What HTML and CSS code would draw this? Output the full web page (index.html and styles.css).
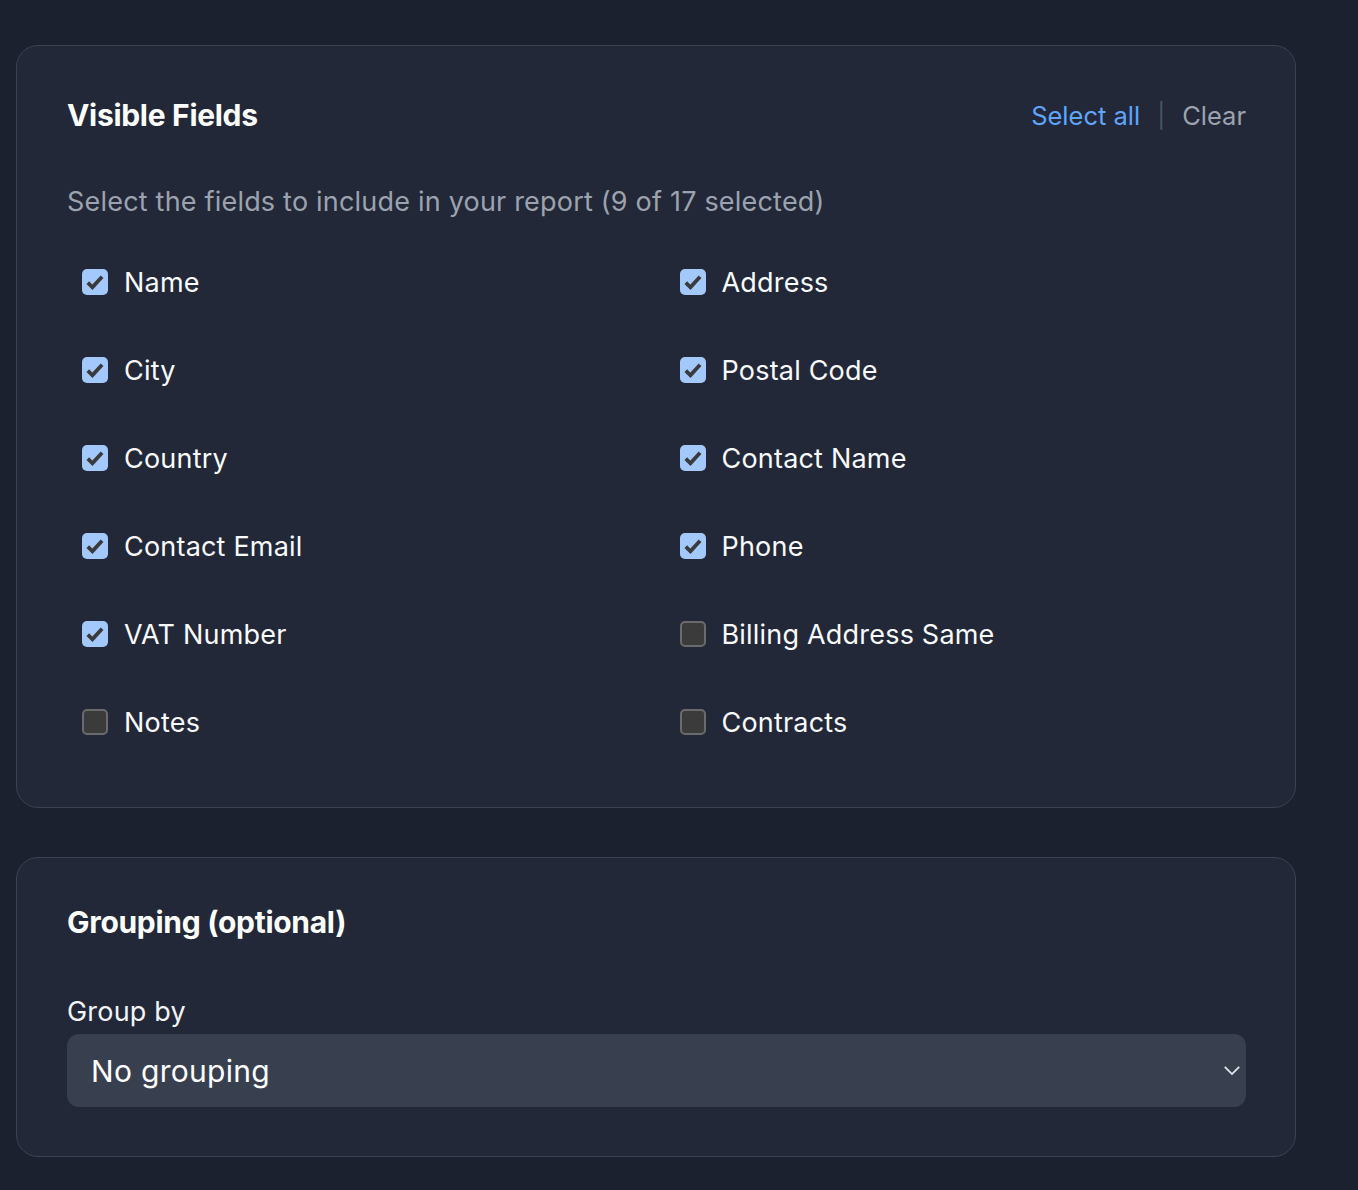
FILE: index.html
```html
<!DOCTYPE html>
<html lang="en">
<head>
    <meta charset="UTF-8">
    <title>Report Builder</title>
    <link rel="stylesheet" href="styles.css">
</head>
<body>
    <div class="page">
        <section class="card">
            <div class="card-header">
                <h2>Visible Fields</h2>
                <div class="header-links">
                    <a href="#" class="link-primary">Select all</a>
                    <span class="sep">|</span>
                    <a href="#" class="link-muted">Clear</a>
                </div>
            </div>
            <p class="hint">Select the fields to include in your report (9 of 17 selected)</p>
            <div class="fields">
                <label class="field"><span class="box checked"><svg viewBox="0 0 16 16"><path d="M3.2 8.4l3.1 3.1 6.4-7"/></svg></span>Name</label>
                <label class="field"><span class="box checked"><svg viewBox="0 0 16 16"><path d="M3.2 8.4l3.1 3.1 6.4-7"/></svg></span>Address</label>
                <label class="field"><span class="box checked"><svg viewBox="0 0 16 16"><path d="M3.2 8.4l3.1 3.1 6.4-7"/></svg></span>City</label>
                <label class="field"><span class="box checked"><svg viewBox="0 0 16 16"><path d="M3.2 8.4l3.1 3.1 6.4-7"/></svg></span>Postal Code</label>
                <label class="field"><span class="box checked"><svg viewBox="0 0 16 16"><path d="M3.2 8.4l3.1 3.1 6.4-7"/></svg></span>Country</label>
                <label class="field"><span class="box checked"><svg viewBox="0 0 16 16"><path d="M3.2 8.4l3.1 3.1 6.4-7"/></svg></span>Contact Name</label>
                <label class="field"><span class="box checked"><svg viewBox="0 0 16 16"><path d="M3.2 8.4l3.1 3.1 6.4-7"/></svg></span>Contact Email</label>
                <label class="field"><span class="box checked"><svg viewBox="0 0 16 16"><path d="M3.2 8.4l3.1 3.1 6.4-7"/></svg></span>Phone</label>
                <label class="field"><span class="box checked"><svg viewBox="0 0 16 16"><path d="M3.2 8.4l3.1 3.1 6.4-7"/></svg></span>VAT Number</label>
                <label class="field"><span class="box"></span>Billing Address Same</label>
                <label class="field"><span class="box"></span>Notes</label>
                <label class="field"><span class="box"></span>Contracts</label>
            </div>
        </section>

        <section class="card card-group">
            <h2>Grouping (optional)</h2>
            <div class="group-label">Group by</div>
            <div class="select">
                <span>No grouping</span>
                <svg viewBox="0 0 20 12"><path d="M2 2l8 8 8-8"/></svg>
            </div>
        </section>
    </div>
</body>
</html>
```

FILE: styles.css
```css
body {
    margin: 0;
    padding: 0;
    background-color: #1c2130;
    color: #f3f4f6;
    font-family: 'Inter', 'Noto Sans', sans-serif;
}
.page {
    padding: 45px 62px 30px 16px;
    display: flex;
    flex-direction: column;
    gap: 49px;
}
.card {
    background-color: #222837;
    border: 1px solid #3b4252;
    border-radius: 22px;
    padding: 46px 49px 63px 50px;
}
.card h2 {
    margin: 0;
    font-size: 30px;
    line-height: 36px;
    font-weight: 700;
    color: #ffffff;
    letter-spacing: -0.3px;
}
.card-header {
    display: flex;
    justify-content: space-between;
    align-items: center;
    height: 46px;
}
.header-links {
    display: flex;
    align-items: center;
    gap: 17px;
    font-size: 25.5px;
}
.header-links a {
    text-decoration: none;
}
.link-primary {
    color: #60a5fa;
}
.link-muted {
    color: #9ca3af;
}
.sep {
    color: #4b5563;
    font-size: 24px;
}
.hint {
    margin: 46px 0 40px;
    font-size: 27px;
    line-height: 36px;
    letter-spacing: 0.2px;
    color: #9ca3af;
}
.fields {
    display: grid;
    grid-template-columns: 1fr 1fr;
    column-gap: 16px;
    row-gap: 44px;
}
.field {
    display: flex;
    align-items: center;
    gap: 16px;
    height: 44px;
    padding-left: 15px;
    font-size: 27px;
    letter-spacing: 0.2px;
    color: #f9fafb;
}
.box {
    width: 22px;
    height: 22px;
    border: 2px solid #6b6b6b;
    border-radius: 5px;
    background-color: #3b3b3b;
    flex-shrink: 0;
}
.box.checked {
    width: 26px;
    height: 26px;
    border: none;
    background-color: #a2c8fc;
    display: flex;
    align-items: center;
    justify-content: center;
}
.box svg {
    width: 24px;
    height: 24px;
    fill: none;
    stroke: #3a3a3a;
    stroke-width: 2.5;
}
.card-group {
    padding-bottom: 49px;
}
.group-label {
    margin-top: 56px;
    font-size: 27px;
    line-height: 32px;
    letter-spacing: 0.2px;
    color: #f3f4f6;
}
.select {
    margin-top: 6px;
    height: 73px;
    background-color: #383f4f;
    border-radius: 12px;
    display: flex;
    align-items: center;
    justify-content: space-between;
    padding: 0 5px 0 24px;
    font-size: 30px;
    letter-spacing: 0.3px;
    color: #ffffff;
}
.select svg {
    width: 18px;
    height: 11px;
    fill: none;
    stroke: #e5e7eb;
    stroke-width: 2;
}
```
